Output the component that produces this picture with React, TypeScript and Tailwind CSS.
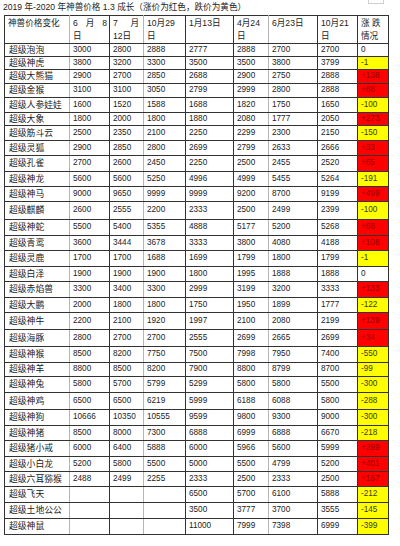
import React from 'react';

type Row = {
  name: string;
  v: string[];
  diff: string;
  h: string;
};

// 列宽（像素）
const colW = ['w-[65px]', 'w-[40px]', 'w-[34px]', 'w-[42px]', 'w-[48px]', 'w-[35px]', 'w-[49px]', 'w-[40px]', 'w-[31px]'];

const rows: Row[] = [
  { name: '超级泡泡', v: ['3000', '2800', '2888', '2777', '2888', '2700', '2700'], diff: '0', h: 'h-[13px]' },
  { name: '超级神虎', v: ['3800', '3200', '3300', '3500', '3500', '3800', '3799'], diff: '-1', h: 'h-[13px]' },
  { name: '超级大熊猫', v: ['2900', '2700', '2850', '2688', '2900', '2750', '2888'], diff: '+138', h: 'h-[14px]' },
  { name: '超级金猴', v: ['3100', '3100', '3050', '2799', '2999', '2800', '2888'], diff: '+88', h: 'h-[14px]' },
  { name: '超级人参娃娃', v: ['1600', '1520', '1588', '1688', '1820', '1750', '1650'], diff: '-100', h: 'h-[15px]' },
  { name: '超级大象', v: ['1800', '2000', '1800', '1880', '2080', '1777', '2050'], diff: '+273', h: 'h-[13px]' },
  { name: '超级筋斗云', v: ['2500', '2350', '2100', '2250', '2299', '2300', '2150'], diff: '-150', h: 'h-[15px]' },
  { name: '超级灵狐', v: ['2900', '2850', '2800', '2699', '2799', '2633', '2666'], diff: '+33', h: 'h-[15px]' },
  { name: '超级孔雀', v: ['2700', '2600', '2450', '2250', '2500', '2455', '2520'], diff: '+65', h: 'h-[16px]' },
  { name: '超级神龙', v: ['5600', '5600', '5250', '4996', '4999', '5455', '5264'], diff: '-191', h: 'h-[15px]' },
  { name: '超级神马', v: ['9000', '9650', '9999', '9999', '9200', '8700', '9199'], diff: '+499', h: 'h-[15px]' },
  { name: '超级麒麟', v: ['2600', '2555', '2200', '2333', '2500', '2499', '2399'], diff: '-100', h: 'h-[18px]' },
  { name: '超级神蛇', v: ['5500', '5400', '5355', '4888', '5177', '5200', '5268'], diff: '+68', h: 'h-[16px]' },
  { name: '超级青鸾', v: ['3600', '3444', '3678', '3333', '3800', '4080', '4188'], diff: '+108', h: 'h-[15px]' },
  { name: '超级灵鹿', v: ['1700', '1700', '1688', '1699', '1799', '1800', '1799'], diff: '-1', h: 'h-[16px]' },
  { name: '超级白泽', v: ['1900', '1900', '1900', '1800', '1995', '1888', '1888'], diff: '0', h: 'h-[15px]' },
  { name: '超级赤焰兽', v: ['3300', '3400', '3300', '2999', '3199', '3200', '3333'], diff: '+133', h: 'h-[16px]' },
  { name: '超级大鹏', v: ['2000', '1800', '1800', '1750', '1950', '1899', '1777'], diff: '-122', h: 'h-[15px]' },
  { name: '超级神牛', v: ['2200', '2100', '1920', '1997', '2100', '2080', '2199'], diff: '+139', h: 'h-[17px]' },
  { name: '超级海豚', v: ['2800', '2700', '2700', '2555', '2699', '2665', '2699'], diff: '+34', h: 'h-[17px]' },
  { name: '超级神猴', v: ['8500', '8200', '7750', '7500', '7998', '7950', '7400'], diff: '-550', h: 'h-[16px]' },
  { name: '超级神羊', v: ['8800', '8500', '8200', '7900', '8800', '8799', '8700'], diff: '-99', h: 'h-[14px]' },
  { name: '超级神兔', v: ['5800', '5700', '5799', '5299', '5800', '5800', '5500'], diff: '-300', h: 'h-[16px]' },
  { name: '超级神鸡', v: ['6500', '6500', '6219', '5999', '6188', '6088', '5800'], diff: '-288', h: 'h-[17px]' },
  { name: '超级神狗', v: ['10666', '10350', '10555', '9599', '9800', '9300', '9000'], diff: '-300', h: 'h-[16px]' },
  { name: '超级神猪', v: ['8500', '8000', '7300', '6888', '6999', '6888', '6670'], diff: '-218', h: 'h-[15px]' },
  { name: '超级猪小戒', v: ['6000', '6400', '5888', '6000', '5966', '5600', '5999'], diff: '+399', h: 'h-[16px]' },
  { name: '超级小白龙', v: ['5200', '5800', '5500', '5000', '5500', '4799', '5200'], diff: '+401', h: 'h-[15px]' },
  { name: '超级六耳猕猴', v: ['2488', '2499', '2255', '2333', '2500', '2333', '2500'], diff: '+167', h: 'h-[15px]' },
  { name: '超级飞天', v: ['', '', '', '6500', '5700', '6100', '5888'], diff: '-212', h: 'h-[16px]' },
  { name: '超级土地公公', v: ['', '', '', '3500', '3777', '3700', '3555'], diff: '-145', h: 'h-[16px]' },
  { name: '超级神鼠', v: ['', '', '', '11000', '7999', '7398', '6999'], diff: '-399', h: 'h-[16px]' },
];

// 第 0、2、5 列右边线较浅
const rightLine = (i: number) => (i === 0 || i === 2 || i === 5 ? 'border-r-[#b5b5b5]' : '');

function diffCls(d: string) {
  if (d.startsWith('+')) return 'bg-[#ff0000] text-[#8f0000]';
  if (d.startsWith('-')) return 'bg-[#ffff00] text-[#3a3a1a]';
  return 'bg-white text-[#222]';
}

const headers: React.ReactNode[] = [
  <span>神兽价格变化</span>,
  <>
    <span className="flex justify-between pr-[2px]"><span>6</span><span>月</span><span>8</span></span>
    <span>日</span>
  </>,
  <>
    <span className="flex justify-between pr-[4px]"><span>7</span><span>月</span></span>
    <span>12日</span>
  </>,
  <>
    <span>10月29</span>
    <span>日</span>
  </>,
  <span>1月13日</span>,
  <>
    <span>4月24</span>
    <span>日</span>
  </>,
  <span>6月23日</span>,
  <>
    <span>10月21</span>
    <span>日</span>
  </>,
  <>
    <span>涨 跌</span>
    <span>情况</span>
  </>,
];

export default function App() {
  return (
    <div
      className="w-[400px] h-[546px] bg-white text-[#222] overflow-hidden"
      style={{ fontFamily: '"Liberation Sans", "Noto Sans CJK SC", sans-serif' }}
    >
      {/* 标题 */}
      <div className="flex items-start h-[15px] pl-[3px]">
        <div className="text-[8.6px] leading-[14px] whitespace-nowrap">
          2019 年-2020 年神兽价格 1.3 成长（涨价为红色，跌价为黄色）
        </div>
        <div className="ml-auto mr-[16px] w-[16px] h-[4px] border-x border-b border-[#d0d0d0]" />
      </div>

      <div className="pl-[4px]">
        <table className="table-fixed border-collapse w-[384px]">
          <colgroup>
            {colW.map((w, i) => (
              <col key={i} className={w} />
            ))}
          </colgroup>
          <thead>
            <tr className="h-[28px]">
              {headers.map((h, i) => (
                <th
                  key={i}
                  className={`border border-[#333] ${rightLine(i)} align-top text-left font-normal text-[8.6px] leading-[13px] p-0 pt-[1px] pl-[3px] whitespace-nowrap`}
                >
                  <div className="flex flex-col">{h}</div>
                </th>
              ))}
            </tr>
          </thead>
          <tbody>
            {rows.map((r) => (
              <tr key={r.name} className={r.h}>
                <td className={`border border-[#333] ${rightLine(0)} p-0 pl-[4px] text-[8.8px] leading-none whitespace-nowrap`}>
                  {r.name}
                </td>
                {r.v.map((v, i) => (
                  <td
                    key={i}
                    className={`border border-[#333] ${rightLine(i + 1)} p-0 pl-[3px] text-[8.2px] leading-none whitespace-nowrap`}
                  >
                    {v}
                  </td>
                ))}
                <td className={`border border-[#333] p-0 pl-[3px] text-[8.2px] leading-none whitespace-nowrap ${diffCls(r.diff)}`}>
                  {r.diff}
                </td>
              </tr>
            ))}
          </tbody>
        </table>
      </div>
    </div>
  );
}
